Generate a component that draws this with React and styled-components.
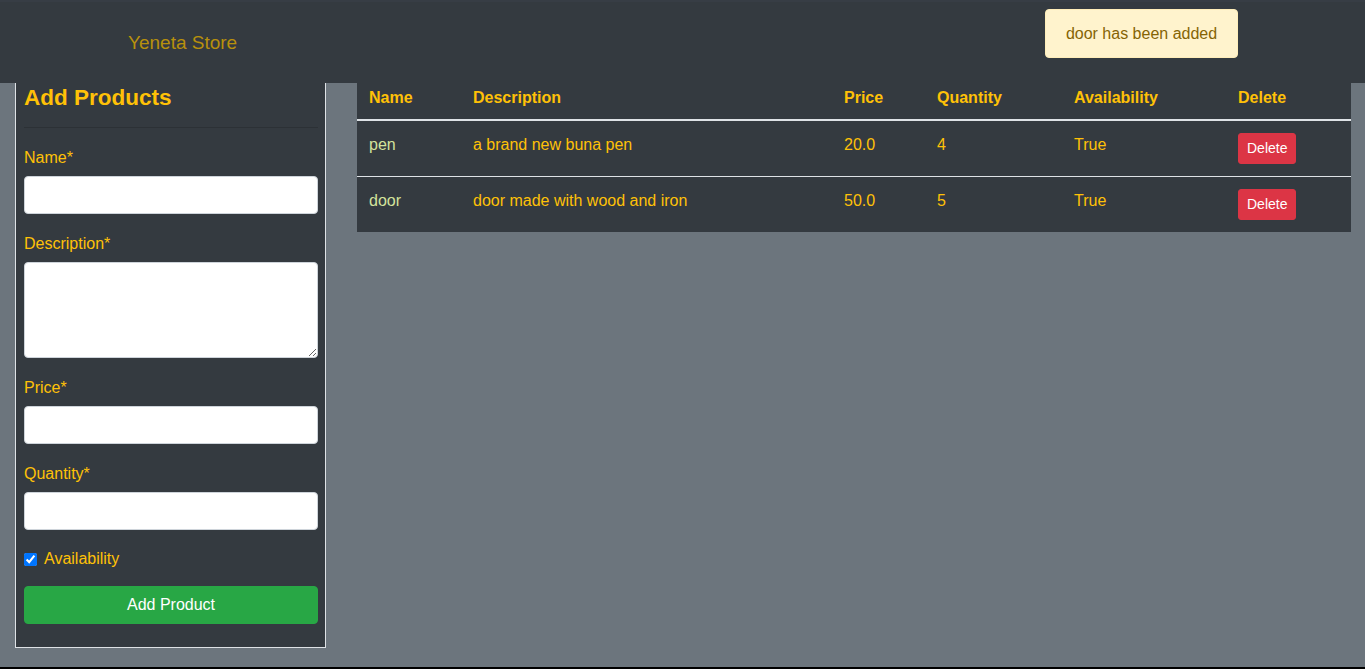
import React from 'react';
import styled, { createGlobalStyle } from 'styled-components';

const GlobalStyle = createGlobalStyle`
  html, body {
    margin: 0;
    padding: 0;
    background: #000;
  }
  body {
    font-family: "Segoe UI", "Liberation Sans", Arial, sans-serif;
    font-size: 16px;
    line-height: 1.5;
  }
  * { box-sizing: border-box; }
`;

const products = [
  { name: 'pen', description: 'a brand new buna pen', price: '20.0', quantity: 4, available: 'True' },
  { name: 'door', description: 'door made with wood and iron', price: '50.0', quantity: 5, available: 'True' },
];

const App = () => {
  return (
    <Page>
      <GlobalStyle />
      <Navbar>
        <Brand>Yeneta Store</Brand>
        <Toast>door has been added</Toast>
      </Navbar>
      <Main>
        <Card>
          <CardHeader>Add Products</CardHeader>
          <Form onSubmit={(e) => e.preventDefault()}>
            <Field>
              <Label>Name*</Label>
              <Input type="text" />
            </Field>
            <Field>
              <Label>Description*</Label>
              <TextArea />
            </Field>
            <Field>
              <Label>Price*</Label>
              <Input type="text" />
            </Field>
            <Field>
              <Label>Quantity*</Label>
              <Input type="text" />
            </Field>
            <CheckRow>
              <input type="checkbox" defaultChecked />
              <span>Availability</span>
            </CheckRow>
            <AddButton type="submit">Add Product</AddButton>
          </Form>
        </Card>
        <TableWrap>
          <Table>
            <colgroup>
              <col style={{ width: 104 }} />
              <col style={{ width: 371 }} />
              <col style={{ width: 93 }} />
              <col style={{ width: 137 }} />
              <col style={{ width: 164 }} />
              <col style={{ width: 125 }} />
            </colgroup>
            <thead>
              <tr>
                <Th>Name</Th>
                <Th>Description</Th>
                <Th>Price</Th>
                <Th>Quantity</Th>
                <Th>Availability</Th>
                <Th>Delete</Th>
              </tr>
            </thead>
            <tbody>
              {products.map((p) => (
                <tr key={p.name}>
                  <Td $pale>{p.name}</Td>
                  <Td>{p.description}</Td>
                  <Td>{p.price}</Td>
                  <Td>{p.quantity}</Td>
                  <Td>{p.available}</Td>
                  <Td>
                    <DeleteButton>Delete</DeleteButton>
                  </Td>
                </tr>
              ))}
            </tbody>
          </Table>
        </TableWrap>
      </Main>
    </Page>
  );
};

const Page = styled.div`
  background: #6c757d;
  min-height: 667px;
`;

const Navbar = styled.nav`
  height: 83px;
  background: #343a40;
  border-top: 2px solid #373d45;
  display: flex;
  align-items: flex-start;
  padding: 0 128px;
`;

const Brand = styled.a`
  color: #b8900c;
  font-size: 19px;
  line-height: 28px;
  margin-top: 27px;
  white-space: nowrap;
`;

const Toast = styled.div`
  margin-left: auto;
  margin-top: 7px;
  margin-right: -1px;
  width: 193px;
  height: 49px;
  display: flex;
  align-items: center;
  justify-content: center;
  background: #fff3cd;
  color: #856404;
  border: 1px solid #ffeeba;
  border-radius: 4px;
  font-size: 16px;
`;

const Main = styled.main`
  display: grid;
  grid-template-columns: 311px 1fr;
  column-gap: 31px;
  align-items: start;
  padding: 0 14px 0 15px;
`;

const Card = styled.section`
  background: #343a40;
  border: 1px solid #dee2e6;
  border-top: none;
  padding: 0 7px 23px 8px;
`;

const CardHeader = styled.h2`
  margin: 0;
  color: #ffc107;
  font-size: 22.5px;
  font-weight: 700;
  line-height: 29px;
  padding-bottom: 15px;
  border-bottom: 1px solid rgba(0, 0, 0, 0.15);
`;

const Form = styled.form`
  display: flex;
  flex-direction: column;
  padding-top: 16px;
`;

const Field = styled.div`
  display: flex;
  flex-direction: column;
  margin-bottom: 16px;
`;

const Label = styled.label`
  color: #ffc107;
  font-size: 16px;
  line-height: 24px;
  padding-top: 2px;
  margin-bottom: 6px;
`;

const Input = styled.input`
  height: 38px;
  width: 100%;
  border: 1px solid #ced4da;
  border-radius: 4px;
  background: #fff;
  padding: 6px 12px;
  font: inherit;
`;

const TextArea = styled.textarea`
  height: 96px;
  width: 100%;
  border: 1px solid #ced4da;
  border-radius: 4px;
  background: #fff;
  padding: 6px 12px;
  font: inherit;
  resize: vertical;
`;

const CheckRow = styled.label`
  display: flex;
  align-items: center;
  gap: 7px;
  color: #ffc107;
  font-size: 16px;
  line-height: 24px;
  margin-top: 1px;
  margin-bottom: 15px;

  input {
    margin: 0;
    width: 13px;
    height: 13px;
  }
`;

const AddButton = styled.button`
  height: 38px;
  width: 100%;
  border: 1px solid #28a745;
  border-radius: 4px;
  background: #28a745;
  color: #fff;
  font: inherit;
  font-size: 16px;
  cursor: pointer;
`;

const TableWrap = styled.div`
  background: #343a40;
`;

const Table = styled.table`
  width: 100%;
  border-collapse: collapse;
  table-layout: fixed;
`;

const Th = styled.th`
  text-align: left;
  color: #ffc107;
  font-weight: 700;
  font-size: 16px;
  line-height: 24px;
  padding: 3px 12px 9px;
  border-bottom: 2px solid #dee2e6;
`;

const Td = styled.td`
  color: ${(p) => (p.$pale ? '#d3e39c' : '#ffc107')};
  font-size: 16px;
  line-height: 24px;
  padding: 12px;
  vertical-align: top;
  border-top: 1px solid #dee2e6;

  tr:first-child > & {
    border-top: none;
  }
`;

const DeleteButton = styled.button`
  height: 31px;
  padding: 0 8px;
  background: #dc3545;
  border: 1px solid #dc3545;
  border-radius: 3px;
  color: #fff;
  font: inherit;
  font-size: 14px;
  line-height: 21px;
  cursor: pointer;
`;

export default App;
